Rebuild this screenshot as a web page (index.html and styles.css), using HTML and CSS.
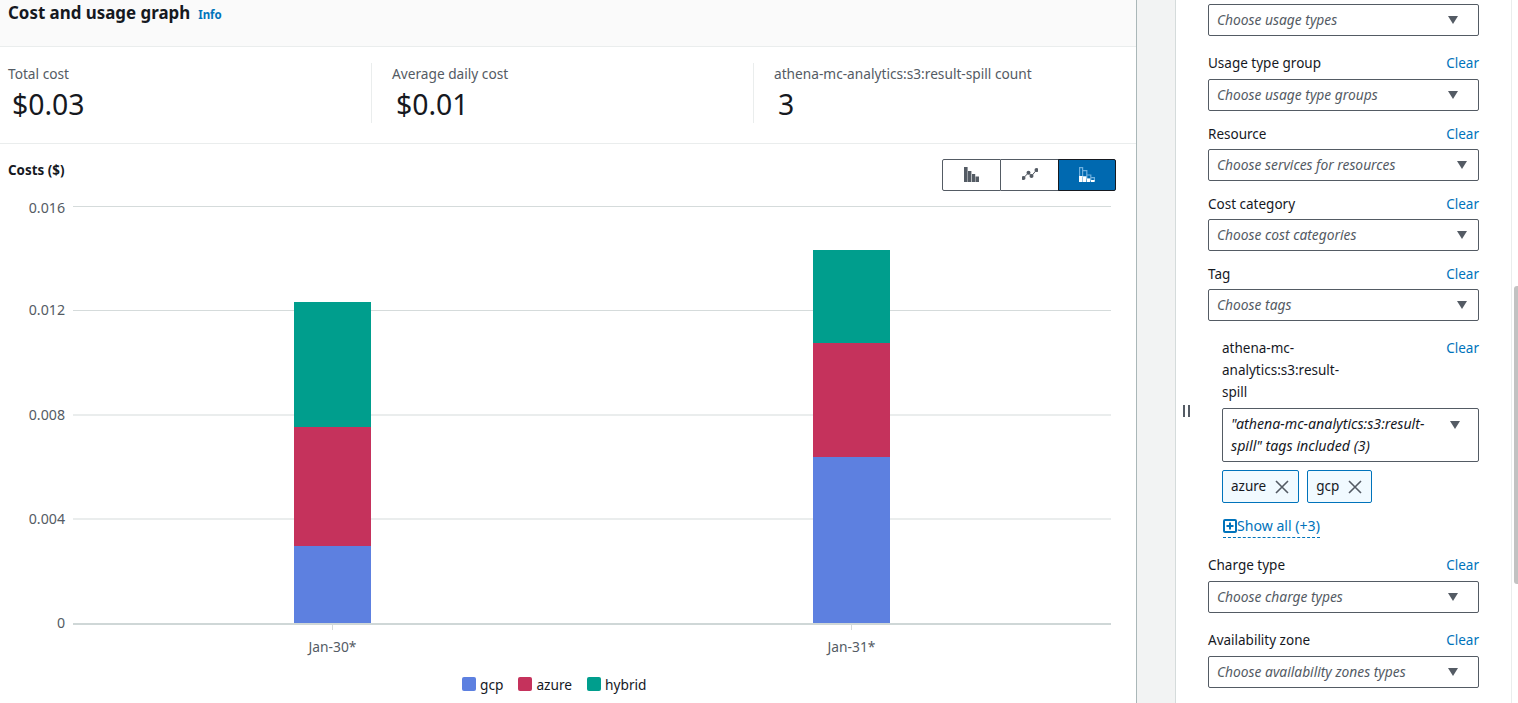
FILE: index.html
```html
<!DOCTYPE html>
<html lang="en">
<head>
<meta charset="utf-8">
<title>Cost and usage graph</title>
<link rel="stylesheet" href="styles.css">
</head>
<body>
<div class="page">
  <main class="main">
    <header class="panel-header">
      <h2 class="panel-title">Cost and usage graph</h2>
      <a class="info-link">Info</a>
    </header>
    <section class="stats">
      <div class="stat stat--first">
        <div class="stat-label">Total cost</div>
        <div class="stat-value">$0.03</div>
      </div>
      <div class="stat">
        <div class="stat-label">Average daily cost</div>
        <div class="stat-value">$0.01</div>
      </div>
      <div class="stat">
        <div class="stat-label">athena-mc-analytics:s3:result-spill count</div>
        <div class="stat-value">3</div>
      </div>
    </section>
    <section class="chart-section">
      <div class="chart-toolbar">
        <div class="axis-title">Costs ($)</div>
        <div class="btn-group">
          <button class="chart-btn">
            <svg width="16" height="16" viewBox="0 0 16 16"><path fill="#545b64" d="M0 0h3.600v15H0zM4 4h3.400v11H4zM8 7h3.200v8H8zM11.600 9.500H15V15h-3.400z"/></svg>
          </button>
          <button class="chart-btn">
            <svg width="16" height="16" viewBox="0 0 16 16"><path stroke="#545b64" stroke-width="1" fill="none" d="M1.500 11L6.500 5.700L9.500 9L14.500 3"/><g fill="#545b64"><circle cx="1.500" cy="11" r="2"/><circle cx="6.500" cy="5.700" r="2"/><circle cx="9.500" cy="9" r="2"/><circle cx="14.500" cy="3" r="2"/></g></svg>
          </button>
          <button class="chart-btn chart-btn--active">
            <svg width="16" height="16" viewBox="0 0 16 16"><path fill="none" stroke="#6fb0de" stroke-width="1.200" d="M.6 .6h3v9h-3zM3.600 3.600h4.200v6h-4.200zM7.800 8h4v4h-4zM11.800 10.600h3.600v3h-3.600z"/><path fill="#ffffff" d="M0 9h3.600v6H0zM4 9.500h3.400V15H4zM8 11.500h3.200V15H8zM12 13h3.600v2H12z"/></svg>
          </button>
        </div>
      </div>
      <svg class="chart" width="1136" height="481" viewBox="0 191 1136 481">
        <g class="grid">
          <line x1="73" x2="1111" y1="206.500" y2="206.500"/>
          <line x1="73" x2="1111" y1="310.500" y2="310.500"/>
          <line x1="73" x2="1111" y1="415" y2="415"/>
          <line x1="73" x2="1111" y1="519" y2="519"/>
        </g>
        <g class="y-labels">
          <text x="65" y="213">0.016</text>
          <text x="65" y="315">0.012</text>
          <text x="65" y="420">0.008</text>
          <text x="65" y="524">0.004</text>
          <text x="65" y="628">0</text>
        </g>
        <rect class="seg-gcp" x="294" y="546" width="77" height="78"/>
        <rect class="seg-azure" x="294" y="427" width="77" height="119"/>
        <rect class="seg-hybrid" x="294" y="302" width="77" height="125"/>
        <rect class="seg-gcp" x="813" y="457" width="77" height="167"/>
        <rect class="seg-azure" x="813" y="343" width="77" height="114"/>
        <rect class="seg-hybrid" x="813" y="250" width="77" height="93"/>
        <line class="axis" x1="73" x2="1111" y1="624" y2="624"/>
        <line class="tick" x1="332.500" x2="332.500" y1="625" y2="630"/>
        <line class="tick" x1="851.500" x2="851.500" y1="625" y2="630"/>
        <text class="x-label" x="332.500" y="652">Jan-30*</text>
        <text class="x-label" x="851.500" y="652">Jan-31*</text>
      </svg>
      <div class="legend">
        <span class="legend-item"><i class="swatch swatch--gcp"></i>gcp</span>
        <span class="legend-item"><i class="swatch swatch--azure"></i>azure</span>
        <span class="legend-item"><i class="swatch swatch--hybrid"></i>hybrid</span>
      </div>
    </section>
  </main>

  <div class="gutter"><span class="drag-handle"></span></div>

  <aside class="sidebar">
    <div class="select select--first"><span>Choose usage types</span><i class="caret"></i></div>

    <div class="field field--roomy">
      <div class="field-head"><span>Usage type group</span><a class="clear">Clear</a></div>
      <div class="select"><span>Choose usage type groups</span><i class="caret"></i></div>
    </div>
    <div class="field">
      <div class="field-head"><span>Resource</span><a class="clear">Clear</a></div>
      <div class="select select--wide"><span>Choose services for resources</span><i class="caret"></i></div>
    </div>
    <div class="field">
      <div class="field-head"><span>Cost category</span><a class="clear">Clear</a></div>
      <div class="select select--wide"><span>Choose cost categories</span><i class="caret"></i></div>
    </div>
    <div class="field">
      <div class="field-head"><span>Tag</span><a class="clear">Clear</a></div>
      <div class="select select--wide"><span>Choose tags</span><i class="caret"></i></div>
    </div>

    <div class="tag-block">
      <div class="tag-head">
        <span class="tag-name">athena-mc-analytics:s3:result-spill</span>
        <a class="clear">Clear</a>
      </div>
      <div class="select select--tall">
        <span>"athena-mc-analytics:s3:result-spill" tags included (3)</span>
        <i class="caret caret--top"></i>
      </div>
      <div class="tokens">
        <span class="token">azure
          <svg width="14" height="14" viewBox="0 0 14 14"><path d="M1 1l12 12M13 1L1 13" stroke="#545b64" stroke-width="1.600" fill="none"/></svg>
        </span>
        <span class="token">gcp
          <svg width="14" height="14" viewBox="0 0 14 14"><path d="M1 1l12 12M13 1L1 13" stroke="#545b64" stroke-width="1.600" fill="none"/></svg>
        </span>
      </div>
      <a class="show-all">
        <svg width="14" height="14" viewBox="0 0 14 14"><rect x="1" y="1" width="12" height="12" rx="1" fill="none" stroke="#0073bb" stroke-width="2"/><path d="M3.500 7h7M7 3.500v7" stroke="#0073bb" stroke-width="2" fill="none"/></svg>Show all (+3)
      </a>
    </div>

    <div class="field field--roomy">
      <div class="field-head"><span>Charge type</span><a class="clear">Clear</a></div>
      <div class="select"><span>Choose charge types</span><i class="caret"></i></div>
    </div>
    <div class="field field--roomy">
      <div class="field-head"><span>Availability zone</span><a class="clear">Clear</a></div>
      <div class="select"><span>Choose availability zones types</span><i class="caret"></i></div>
    </div>
  </aside>

  <div class="scroll-track"><span class="scroll-thumb"></span></div>
</div>
</body>
</html>
```
FILE: styles.css
```css
* { box-sizing: border-box; }

html, body {
  margin: 0;
  height: 100%;
  overflow: hidden;
  background: #fff;
}

body {
  font-family: "Noto Sans", "Open Sans", sans-serif;
  font-size: 13.5px;
  color: #16191f;
}

a { color: #0073bb; }

.page {
  position: relative;
  display: flex;
  width: 1518px;
  height: 703px;
  overflow: hidden;
}

/* Main panel */
.main {
  width: 1137px;
  flex: none;
  border-right: 1px solid #aab7b8;
}

.panel-header {
  display: flex;
  align-items: baseline;
  gap: 8px;
  height: 47px;
  padding: 0 8px;
  background: #fafafa;
  border-bottom: 1px solid #eaeded;
}

.panel-title {
  margin: 0;
  font-size: 16.900px;
  line-height: 26px;
  font-weight: 700;
}

.info-link {
  font-size: 11.500px;
  font-weight: 700;
}

.stats {
  display: flex;
  height: 97px;
  padding-top: 16px;
  border-bottom: 1px solid #eaeded;
}

.stat {
  width: 382px;
  height: 60px;
  padding-left: 20px;
  border-left: 1px solid #eaeded;
}

.stat--first {
  width: 371px;
  padding-left: 8px;
  border-left: 0;
}

.stat-label {
  font-size: 13.700px;
  line-height: 22px;
  color: #545b64;
}

.stat-value {
  margin: 2px 0 0 4px;
  font-size: 28.400px;
  line-height: 34px;
}

.chart-section { height: 559px; }

.chart-toolbar {
  display: flex;
  justify-content: space-between;
  align-items: flex-start;
  padding: 15px 20px 0 8px;
}

.axis-title {
  font-size: 13.400px;
  line-height: 22px;
  font-weight: 700;
}

.btn-group {
  display: flex;
  height: 32px;
}

.chart-btn {
  display: flex;
  align-items: center;
  justify-content: center;
  width: 58px;
  height: 32px;
  margin: 0;
  padding: 0;
  background: #fff;
  border: 1px solid #545b64;
  border-left-width: 0;
}

.chart-btn:first-child {
  width: 59px;
  border-left-width: 1px;
  border-radius: 2px 0 0 2px;
}

.chart-btn--active {
  width: 58px;
  margin-left: -1px;
  background: #0069b0;
  border-color: #16191f;
  border-left-width: 1px;
  border-radius: 0 2px 2px 0;
}

.chart { display: block; }

.grid line {
  stroke: #d5dbdb;
  stroke-width: 1;
}

.axis {
  stroke: #cfd7d7;
  stroke-width: 2;
}

.tick {
  stroke: #d5dbdb;
  stroke-width: 1;
}

.y-labels text {
  font-size: 14.200px;
  fill: #545b64;
  text-anchor: end;
}

.x-label {
  font-size: 13.800px;
  fill: #545b64;
  text-anchor: middle;
}

.seg-gcp { fill: #5d80e0; }
.seg-azure { fill: #c5325c; }
.seg-hybrid { fill: #009e8d; }

.legend {
  display: flex;
  height: 26px;
  padding: 0 0 2px 462px;
  align-items: center;
  gap: 15px;
}

.legend-item {
  display: flex;
  align-items: center;
  gap: 4px;
  font-size: 13.700px;
}

.swatch {
  width: 14px;
  height: 14px;
  border-radius: 2px;
}

.swatch--gcp { background: #5d80e0; }
.swatch--azure { background: #c5325c; }
.swatch--hybrid { background: #009e8d; }

/* Gutter */
.gutter {
  position: relative;
  width: 39px;
  flex: none;
  background: #f2f3f3;
  border-right: 1px solid #d5dbdb;
}

.drag-handle {
  position: absolute;
  left: 46px;
  top: 405px;
  width: 7px;
  height: 12px;
  border-left: 2px solid #545b64;
  border-right: 2px solid #545b64;
}

/* Filter sidebar */
.sidebar {
  width: 336px;
  flex: none;
  height: 703px;
  padding: 4px 32px 0;
  border-right: 1px solid #eaeded;
}

.field { margin-top: 13px; }

.field--roomy { margin-top: 17px; }

.field-head {
  display: flex;
  justify-content: space-between;
  height: 20px;
  margin-bottom: 5px;
  line-height: 20px;
}

.field--roomy .field-head { margin-bottom: 6px; }

.clear { color: #0073bb; }

.select {
  display: flex;
  align-items: center;
  justify-content: space-between;
  height: 32px;
  padding: 0 20px 2px 8px;
  border: 1px solid #545b64;
  border-radius: 2px;
  font-style: italic;
  color: #545b64;
  font-size: 13.800px;
}

.select--wide { padding-right: 11px; }

.select--tall {
  align-items: flex-start;
  height: 54px;
  padding: 4px 18px 0 8px;
  font-size: 14.200px;
  line-height: 22px;
  color: #16191f;
}

.select--tall span { width: 218px; }

.caret {
  width: 0;
  height: 0;
  border-left: 5px solid transparent;
  border-right: 5px solid transparent;
  border-top: 8px solid #545b64;
  margin-top: 2px;
}

.caret--top { margin-top: 8px; }

.tag-block {
  margin: 16px 0 0 14px;
}

.tag-head {
  display: flex;
  justify-content: space-between;
  line-height: 22px;
  margin-bottom: 5px;
}

.tag-name { width: 130px; }

.tokens {
  display: flex;
  gap: 8px;
  margin-top: 8px;
}

.token {
  display: flex;
  align-items: center;
  gap: 9px;
  height: 33px;
  padding: 0 9px 2px 8px;
  background: #f1faff;
  border: 1px solid #0073bb;
  border-radius: 2px;
}

.token svg { margin-top: 2px; }

.show-all {
  display: inline-flex;
  align-items: center;
  height: 24px;
  margin: 11px 0 0 1px;
  color: #0073bb;
  border-bottom: 1px dashed #0073bb;
  line-height: 20px;
  font-size: 14.100px;
}

.scroll-track {
  position: absolute;
  top: 0;
  right: 0;
  width: 6px;
  height: 703px;
}

.scroll-thumb {
  position: absolute;
  left: 2px;
  top: 286px;
  width: 4px;
  height: 298px;
  background: #c2c2c2;
  border-radius: 3px 0 0 3px;
}
```
